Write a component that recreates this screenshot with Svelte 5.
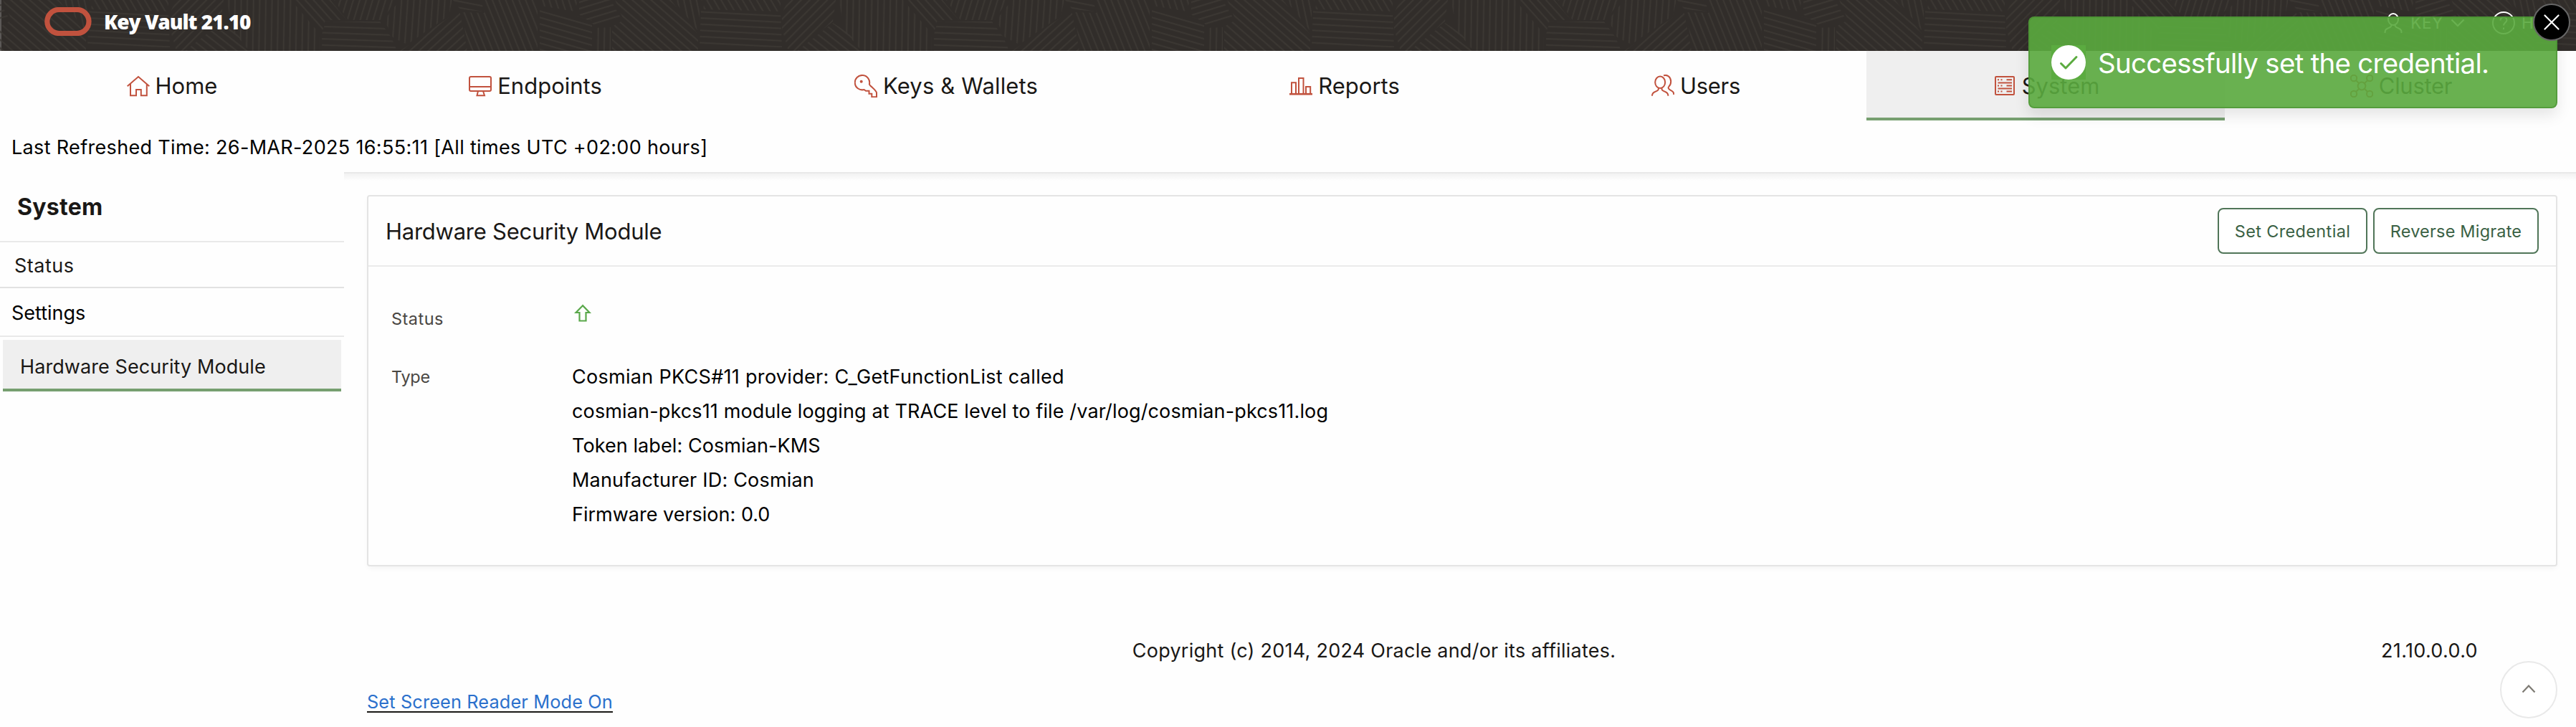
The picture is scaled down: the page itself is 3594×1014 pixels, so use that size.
<script>
  // Hatched patches of the header weave: line angle and outline within one tile
  const patches = [
    { a: -45, p: '-9,18 0,0 66,0 62,30 10,71 0,71 -9,40' },
    { a: 38, p: '62,32 85,46 100,71 12,71' },
    { a: 91, p: '70,0 160,0 200,47 200,71 102,71 79,44' },
    { a: 48, p: '162,0 215,0 238,28 208,28 203,46' },
    { a: 2, p: '208,30 284,30 300,52 308,71 203,71 203,48' },
    { a: -73, p: '220,0 308,0 286,28 240,28' },
    { a: -86, p: '312,0 385,0 380,22 322,62 302,52 290,28' },
    { a: -42, p: '312,71 395,14 406,71' },
    { a: 11, p: '386,0 424,0 430,16 396,13' },
    { a: 68, p: '428,0 504,0 504,71 408,71 398,17 430,18' },
    { a: 72, p: '508,0 560,0 556,16 508,8' },
    { a: 16, p: '507,11 580,28 580,71 507,71' },
    { a: -17, p: '562,0 606,0 622,28 585,36 562,20' },
    { a: 91, p: '583,39 606,38 606,71 583,71' },
    { a: 41, p: '612,0 690,0 728,48 728,71 608,71 608,37 624,28' },
    { a: 78, p: '694,0 734,0 730,14 730,46' },
    { a: 3, p: '732,15 843,18 845,66 730,66' },
    { a: 60, p: '737,0 843,0 843,16 735,13' }
  ];
  const tiles = [-608, 246, 1100, 1954, 2808];

  const tabs = [
    { id: 'home', label: 'Home' },
    { id: 'endpoints', label: 'Endpoints' },
    { id: 'keys', label: 'Keys & Wallets' },
    { id: 'reports', label: 'Reports' },
    { id: 'users', label: 'Users' },
    { id: 'system', label: 'System' },
    { id: 'cluster', label: 'Cluster' }
  ];
</script>

{#snippet icon(id)}
  <svg class="icon" viewBox="0 0 32 32">
    {#if id === 'home'}
      <path d="M.7 16.3 16 3l15.3 13.3M5 13v16.2h8V21h6.8v8.2h8V13" />
    {:else if id === 'endpoints'}
      <rect x="1" y="3" width="30" height="20" rx="2" />
      <path d="M1 17h30M13 23l-1.5 6.2h10.5L20 23" />
    {:else if id === 'keys'}
      <path d="M20.9 13.5A10.2 10.2 0 1 0 13.6 21L16 22.8h4.5v4H24.3v4.4H31v-6C30.5 22.5 26.5 19.5 24.5 17.5 22.5 15.6 21.5 15.5 20.9 13.5Z" />
      <circle class="dot" cx="9.7" cy="9.8" r="2" />
    {:else if id === 'reports'}
      <path d="M3 26V11.2h6V26M13 26V5h6.500v21M23 26v-9h6.200v9" />
      <path class="thick" d="M0 27.2h32" />
    {:else if id === 'users'}
      <ellipse cx="12.2" cy="10.8" rx="7" ry="8.2" />
      <path d="M9.800 18.500c.6 3-.8 3.600-4 5.200-3.200 1.600-4.800 2.500-4.800 6M14.600 18.500c-.6 3 .8 3.600 4 5.200 3.200 1.600 4.800 2.500 4.800 6M17 1.400c6-2 10.200 2.600 10.200 8.400 0 3-1 5.200-2.700 6.800-1.600 1.600-.9 3.500 1.900 5 3.400 1.800 4.900 2.800 4.900 6.400" />
    {:else if id === 'system'}
      <rect x="3" y="3" width="26" height="25" rx="1" />
      <path d="M6.500 11.500h19.500M6.500 19.500h19.500M6 7.300h2M10.500 7.300h2M18.500 7.300h7.500M6 15.400h2M10.500 15.400h2M18.500 15.400h7.500M6 23.500h2M10.500 23.500h2M18.500 23.500h7.500" />
    {:else}
      <circle cx="5" cy="5" r="4.2" /><circle cx="27.200" cy="5" r="4.2" />
      <circle cx="5" cy="27" r="4.2" /><circle cx="27.200" cy="27" r="4.2" />
      <circle cx="16" cy="16" r="5.4" />
      <path d="m8 8 4.300 4.200M24.200 8l-4.300 4.200M8 24l4.300-4.200M24.200 24l-4.300-4.200" />
    {/if}
  </svg>
{/snippet}

<div class="page">
  <header>
    <svg class="weave" width="3594" height="71">
      <defs>
        {#each patches as patch, i}
          <pattern id="hatch{i}" width="40" height="8.6" patternUnits="userSpaceOnUse" patternTransform="rotate({patch.a})">
            <path d="M0 4h40" />
          </pattern>
        {/each}
        <g id="tile">
          {#each patches as patch, i}
            <polygon points={patch.p} fill="url(#hatch{i})" />
          {/each}
        </g>
      </defs>
      {#each tiles as x}
        <use href="#tile" {x} />
      {/each}
    </svg>
    <svg class="logo" viewBox="0 0 66 40"><rect x="3.8" y="3.5" width="58.2" height="33" rx="16.5" /></svg>
    <span class="brand">Key Vault 21.10</span>
    <div class="account">
      <svg class="person" viewBox="0 0 26 30"><ellipse cx="13" cy="10" rx="7" ry="8" /><path d="M10.500 17.500c.5 3.500-2 3.500-5 5C2 24 1.500 25.500 1.500 29M15.500 17.500c-.5 3.500 2 3.500 5 5 3.500 1.500 4 3 4 6.500" /></svg>
      <span class="user">KEY</span>
      <svg class="caret" viewBox="0 0 20 12"><path d="m1.500 1.500 8.500 8.500 8.500-8.500" /></svg>
      <svg class="help" viewBox="0 0 32 32"><circle cx="16" cy="16" r="15" /><path d="M11.500 12.500c0-3 2-4.500 4.500-4.500s4.500 1.700 4.500 4c0 3.500-4.500 3.500-4.500 7.500M16 22.500v2.500" /></svg>
      <span>Help</span>
    </div>
  </header>

  <nav>
    {#each tabs as tab}
      <a class="tab {tab.id}" class:active={tab.id === 'system'}>
        {@render icon(tab.id)}<span>{tab.label}</span>
      </a>
    {/each}
  </nav>

  <div class="refreshed">Last Refreshed Time: 26-MAR-2025 16:55:11 [All times UTC +02:00 hours]</div>

  <div class="columns">
    <aside>
      <h2>System</h2>
      <a class="side status">Status</a>
      <a class="side settings">Settings</a>
      <a class="side current">Hardware Security Module</a>
    </aside>

    <main>
      <section class="card">
        <div class="card-head">
          <h1>Hardware Security Module</h1>
          <button class="set">Set Credential</button>
          <button class="reverse">Reverse Migrate</button>
        </div>
        <dl>
          <dt class="k1">Status</dt>
          <dd>
            <svg class="up" viewBox="0 0 24 26"><path d="M12 2.2 2.500 12h5v11.500h9V12h5Z" /></svg>
          </dd>
          <dt class="k2">Type</dt>
          <dd>
            <p class="l1">Cosmian PKCS#11 provider: C_GetFunctionList called</p>
            <p class="l2">cosmian-pkcs11 module logging at TRACE level to file /var/log/cosmian-pkcs11.log</p>
            <p class="l3">Token label: Cosmian-KMS</p>
            <p class="l4">Manufacturer ID: Cosmian</p>
            <p class="l5">Firmware version: 0.0</p>
          </dd>
        </dl>
      </section>
      <footer>
        <span class="copy">Copyright (c) 2014, 2024 Oracle and/or its affiliates.</span>
        <span class="version">21.10.0.0.0</span>
      </footer>
      <a class="reader">Set Screen Reader Mode On</a>
    </main>
  </div>

  <button class="to-top" aria-label="Back to top">
    <svg viewBox="0 0 20 12"><path d="m1.500 10.500 8.500-9 8.500 9" /></svg>
  </button>

  <div class="toast">
    <svg class="check" viewBox="0 0 48 48"><circle cx="24" cy="24" r="24" /><path d="m13.500 25.500 6.500 6.500L35 16.500" /></svg>
    <span>Successfully set the credential.</span>
    <button class="close" aria-label="Close"><svg viewBox="0 0 22 22"><path d="m1.500 1.500 19 19M20.500 1.500l-19 19" /></svg></button>
  </div>
</div>

<style>
  :global(body) { margin: 0; background: #fefefe; }
  .page {
    position: relative;
    width: 3594px;
    height: 1014px;
    overflow: hidden;
    background: #fefefe;
    color: #1a1816;
    font-family: Inter, "Liberation Sans", sans-serif;
    font-size: 27px;
    white-space: nowrap;
  }
  svg { display: block; flex: none; fill: none; }
  button { font-family: inherit; padding: 0; box-sizing: border-box; background: #fff; }
  h1, h2, p, dl, dd { margin: 0; }

  header {
    position: relative;
    display: flex;
    align-items: center;
    box-sizing: border-box;
    height: 71px;
    padding: 0 0 11px 62px;
    background: #312d2a;
    color: #fff;
  }
  header::before { content: ""; position: absolute; left: 0; top: 0; width: 2px; height: 71px; background: #5c5957; }
  .weave { position: absolute; left: 0; top: 0; }
  .weave path { stroke: #3c3833; stroke-width: 2; }
  .logo { position: relative; width: 66px; height: 40px; }
  .logo rect { stroke: #c1523e; stroke-width: 7.2; }
  .brand { position: relative; margin-left: 17px; font: 800 28px "Open Sans", sans-serif; letter-spacing: -1px; }
  .account { position: relative; display: flex; align-items: center; margin: 3px 27px 0 auto; font-size: 22.5px; height: 58px; }
  .account svg { stroke: #fff; stroke-width: 2; }
  .person { width: 26px; height: 30px; }
  .user { margin-left: 11px; letter-spacing: .6px; }
  .caret { width: 20px; height: 12px; margin-left: 10px; }
  .help { width: 32px; height: 32px; margin: 0 9px 0 38px; }

  nav { display: grid; grid-template-columns: 478px 536px 610px 502px 478px 500px 490px; height: 97px; }
  .tab {
    display: flex;
    align-items: center;
    justify-content: center;
    box-sizing: border-box;
    gap: 8px;
    padding: 4px 0 0 2px;
    border-bottom: 4px solid transparent;
    font-size: 31px;
  }
  .active { background: #efefef; border-bottom-color: #769f70; }
  .icon { width: 32px; height: 32px; stroke: #c1523e; stroke-width: 2; }
  .icon .dot { fill: #c1523e; stroke: none; }
  .icon .thick { stroke-width: 2.6; }
  .keys { letter-spacing: .15px; }
  .users, .cluster { letter-spacing: -.29px; }

  .refreshed { height: 69px; padding: 3px 0 0 16px; line-height: 70px; color: #000; letter-spacing: .33px; }

  .columns { display: grid; grid-template-columns: 480px 1fr; }
  aside { display: flex; flex-direction: column; }
  h2 { padding: 2px 0 0 24px; border-bottom: 2px solid #e9e9e9; font-size: 32px; font-weight: 650; line-height: 94px; letter-spacing: .3px; }
  .side { display: block; }
  .status { padding: 4px 0 0 20px; border-bottom: 2px solid #e2e2e2; line-height: 58px; letter-spacing: .5px; }
  .settings { padding: 4px 0 0 16px; border-bottom: 2px solid #e9e9e9; line-height: 62px; color: #000; }
  .current { margin: 4px 4px 0; padding: 8px 0 0 24px; background: #efefef; border-bottom: 4px solid #769f70; line-height: 60px; letter-spacing: .08px; }

  main { position: relative; padding: 32px 26px 0 32px; }
  main::before {
    content: "";
    position: absolute;
    inset: 0 0 auto;
    height: 12px;
    background: linear-gradient(#e9e9e9 0 2px, #f2f2f2 2px, #fefefe 12px);
  }
  .card { box-sizing: border-box; height: 518px; border: 2px solid #e4e4e4; border-radius: 4px; background: #fefefe; box-shadow: 0 4px 8px -2px rgba(0, 0, 0, .05); }
  .card-head { display: flex; align-items: center; height: 96px; padding: 0 24px 0 24px; border-bottom: 2px solid #ebebeb; }
  h1 { margin-right: auto; font-size: 31px; font-weight: 400; letter-spacing: -.25px; }
  .card-head button { height: 64px; border: 2px solid #507558; border-radius: 8px; color: #3a6144; font-size: 23.5px; }
  .set { width: 209px; margin-right: 8px; letter-spacing: .35px; }
  .reverse { width: 231px; letter-spacing: .19px; }
  dl { display: grid; grid-template-columns: 252px 1fr; row-gap: 33px; padding: 49px 0 0 32px; line-height: 48px; }
  dt { color: #4a4743; font-size: 23.5px; }
  dd { color: #000; }
  .k1 { letter-spacing: .47px; }
  .k2 { letter-spacing: -.3px; }
  .up { width: 24px; height: 26px; margin: 3px 0 0 3px; stroke: #5aa84b; stroke-width: 2.2; }
  .l1 { letter-spacing: .3px; }
  .l2 { letter-spacing: .14px; }
  .l3 { letter-spacing: .08px; }
  .l4 { letter-spacing: .2px; }

  footer { display: flex; margin: 94px 111px 0 0; line-height: 48px; }
  .copy { flex: 1; text-align: center; letter-spacing: .25px; }
  .version { letter-spacing: .34px; }
  .reader { display: inline-block; margin-top: 33px; border-bottom: 2px solid #1a1816; color: #2b70cc; font-size: 25.3px; line-height: 27px; letter-spacing: .14px; }

  .to-top {
    position: absolute;
    right: 26px;
    top: 922px;
    display: grid;
    place-items: center;
    width: 80px;
    height: 80px;
    border: 2px solid #e9e9e9;
    border-radius: 50%;
  }
  .to-top svg { width: 20px; height: 12px; stroke: #7e7b74; stroke-width: 2.2; margin-top: -2px; }

  .toast {
    position: absolute;
    left: 2830px;
    top: 23px;
    display: flex;
    align-items: center;
    box-sizing: border-box;
    width: 738px;
    height: 128px;
    padding: 0 0 0 30px;
    border: 2px solid rgba(74, 145, 50, .6);
    border-radius: 8px;
    background: rgba(90, 169, 63, .91);
    box-shadow: 0 10px 20px rgba(0, 0, 0, .1);
    color: #fff;
    font-size: 38.5px;
    letter-spacing: -.73px;
  }
  .toast span { margin: 1px 0 0 17px; }
  .check { width: 48px; height: 48px; background: #5bab40; }
  .check circle { fill: #fff; }
  .check path { stroke: #5bab40; stroke-width: 3; stroke-linecap: round; stroke-linejoin: round; }
  .close {
    position: absolute;
    right: -20px;
    top: -20px;
    display: grid;
    place-items: center;
    width: 52px;
    height: 52px;
    border: 2px solid #666;
    border-radius: 50%;
    background: #000;
  }
  .close svg { width: 22px; height: 22px; stroke: #fff; stroke-width: 2.2; stroke-linecap: round; }
</style>
